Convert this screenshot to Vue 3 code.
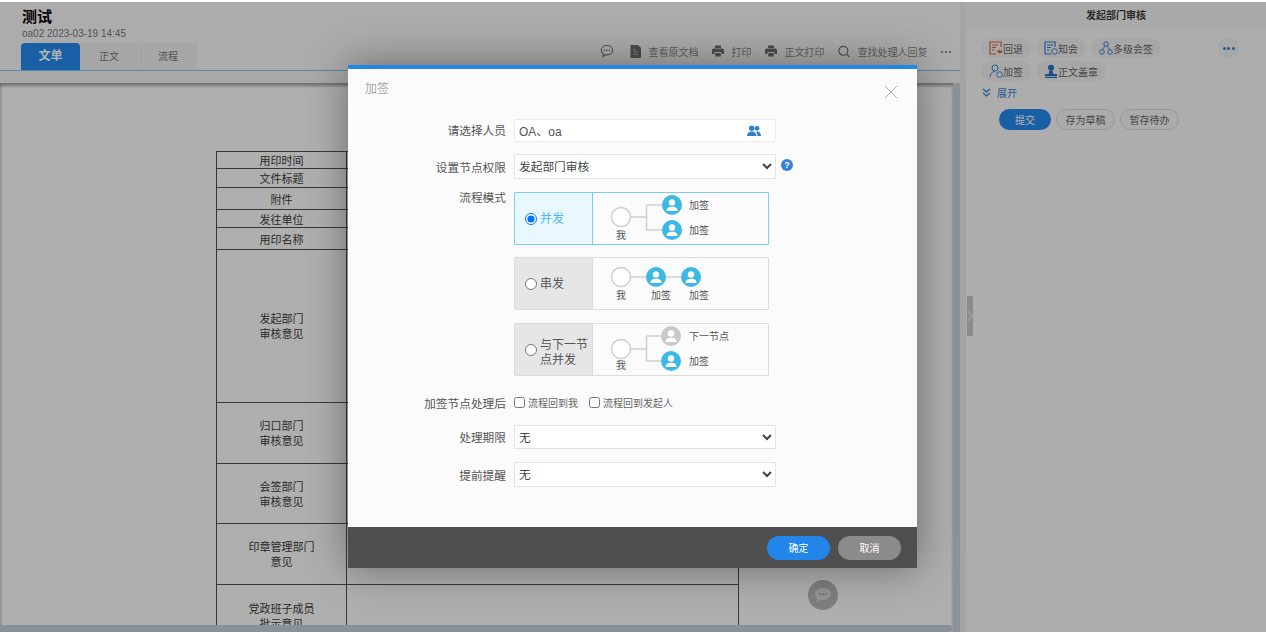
<script setup>
import { ref } from 'vue';

const tabs = ['文单', '正文', '流程'];
const tools = [
  { icon: 'doc', text: '查看原文档' },
  { icon: 'print', text: '打印' },
  { icon: 'print', text: '正文打印' },
  { icon: 'search', text: '查找处理人回复' }
];

// 表格行高来自文单模板
const rows = [
  { h: 17, text: ['用印时间'] },
  { h: 19, text: ['文件标题'] },
  { h: 22, text: ['附件'] },
  { h: 18, text: ['发往单位'] },
  { h: 22, text: ['用印名称'] },
  { h: 153, text: ['发起部门', '审核意见'] },
  { h: 61, text: ['归口部门', '审核意见'] },
  { h: 60, text: ['会签部门', '审核意见'] },
  { h: 61, text: ['印章管理部门', '意见'] },
  { h: 62, text: ['党政班子成员', '批示意见'] }
];

const modes = [
  {
    id: 'parallel',
    label: ['并发'],
    me: [28, 24],
    lines: ['M38 24H53.5M53.5 12V37M53.5 12H69M53.5 37H69'],
    nodes: [{ x: 79, y: 12 }, { x: 79, y: 37 }],
    texts: [
      { x: 23, y: 46, t: '我' },
      { x: 96, y: 15.5, t: '加签' },
      { x: 96, y: 41, t: '加签' }
    ]
  },
  {
    id: 'serial',
    label: ['串发'],
    me: [28, 19],
    lines: ['M38 19H88'],
    nodes: [{ x: 63, y: 19 }, { x: 98, y: 19 }],
    texts: [
      { x: 23, y: 41, t: '我' },
      { x: 58, y: 41, t: '加签' },
      { x: 96, y: 41, t: '加签' }
    ]
  },
  {
    id: 'next',
    label: ['与下一节', '点并发'],
    me: [28, 25],
    lines: ['M38 25H53.5M53.5 12V37M53.5 12H68M53.5 37H68'],
    nodes: [{ x: 78, y: 12, gray: true }, { x: 78, y: 37 }],
    texts: [
      { x: 23, y: 45, t: '我' },
      { x: 96, y: 15.5, t: '下一节点' },
      { x: 96, y: 40.5, t: '加签' }
    ]
  }
];

const mode = ref('parallel');
</script>

<template>
  <div class="page">
    <div class="main">
      <header class="head">
        <div class="head-left">
          <h1>测试</h1>
          <p class="meta">oa02 2023-03-19 14:45</p>
          <div class="tabs">
            <span v-for="(t, i) in tabs" :key="t" class="tab" :class="{ active: i === 0 }">{{ t }}</span>
          </div>
        </div>
        <div class="tools">
          <svg class="tool-chat" width="14" height="14" viewBox="0 0 14 14">
            <path d="M7 1.5c3.2 0 5.6 2 5.6 4.7S10.200 10.900 7 10.900c-.6 0-1.200-.1-1.700-.2L3 12.500v-2.700C2 8.900 1.400 7.600 1.400 6.200 1.400 3.500 3.800 1.500 7 1.500z" fill="none" stroke="#7c7c7c" stroke-width="1.200" />
            <circle cx="4.600" cy="6.200" r=".8" fill="#7c7c7c" />
            <circle cx="7" cy="6.200" r=".8" fill="#7c7c7c" />
            <circle cx="9.400" cy="6.200" r=".8" fill="#7c7c7c" />
          </svg>
          <span v-for="tool in tools" :key="tool.text" class="tool">
            <svg v-if="tool.icon === 'doc'" width="11" height="13" viewBox="0 0 11 13">
              <path d="M.5 0H8l3 3v10H.5z" fill="#6f6f6f" />
              <path d="M3 4.500h3M3 7h5M3 9.500h5" stroke="#b0b0b0" stroke-width="1" />
            </svg>
            <svg v-else-if="tool.icon === 'print'" width="12" height="12" viewBox="0 0 12 12">
              <path d="M3 .5h6V3H3zM1.500 3.500h9A1.500 1.500 0 0 1 12 5v4H9.500V7h-7v2H0V5a1.500 1.500 0 0 1 1.500-1.500zM3.200 8h5.600v3.500H3.200z" fill="#6f6f6f" />
            </svg>
            <svg v-else width="12" height="13" viewBox="0 0 13 13">
              <circle cx="5.800" cy="5.800" r="4.800" fill="none" stroke="#6f6f6f" stroke-width="1.200" />
              <path d="M9.300 9.300l3 3" stroke="#6f6f6f" stroke-width="1.300" />
            </svg>
            <em>{{ tool.text }}</em>
          </span>
          <span class="tool-more">
            <i></i><i></i><i></i>
          </span>
        </div>
      </header>
      <div class="strip"></div>
      <div class="doc-wrap">
        <div class="doc">
          <table class="form-table">
            <tbody>
              <tr v-for="row in rows" :key="row.text[0]" :style="{ height: row.h + 'px' }">
                <td class="cell-label" :class="{ two: row.text.length > 1 }">
                  <div v-for="line in row.text" :key="line">{{ line }}</div>
                </td>
                <td></td>
              </tr>
            </tbody>
          </table>
          <div class="hscroll"></div>
        </div>
        <div class="vscroll"></div>
      </div>
    </div>

    <div class="gutter">
      <div class="handle">
        <svg width="6" height="12" viewBox="0 0 6 12">
          <path d="M1 1l4 5-4 5" fill="none" stroke="#eeeeee" stroke-width="1.200" />
        </svg>
      </div>
    </div>

    <aside class="side">
      <div class="side-title">发起部门审核</div>
      <div class="actions">
        <div class="action-row">
          <span class="pill">
            <svg width="14" height="14" viewBox="0 0 14 14">
              <path d="M12 6V1H1v12h6" fill="none" stroke="#d9623f" stroke-width="1.200" />
              <path d="M3 4h6M3 6.500h4M3 9h2.500" stroke="#d9623f" />
              <path d="M8 10.500l2.500-2.500v1.500H13V12h-2.500v1z" fill="#d9623f" />
            </svg>
            回退
          </span>
          <span class="pill">
            <svg width="14" height="14" viewBox="0 0 14 14">
              <path d="M11 6V1H1v12h6" fill="none" stroke="#3a7fd0" stroke-width="1.200" />
              <path d="M3 4h6M3 6.500h4M3 9h2.500" stroke="#3a7fd0" />
              <circle cx="10.500" cy="10.500" r="2.800" fill="none" stroke="#3a7fd0" />
            </svg>
            知会
          </span>
          <span class="pill">
            <svg width="14" height="14" viewBox="0 0 14 14" fill="none" stroke="#3a7fd0">
              <rect x="5" y="1" width="4" height="4" rx="1" />
              <circle cx="3" cy="11" r="2.300" />
              <circle cx="11" cy="11" r="2.300" />
              <path d="M6 5L3.500 8.700M8 5l2.500 3.700" />
            </svg>
            多级会签
          </span>
          <span class="more"><i></i><i></i><i></i></span>
        </div>
        <div class="action-row">
          <span class="pill">
            <svg width="14" height="14" viewBox="0 0 14 14" fill="none" stroke="#3a7fd0">
              <circle cx="6" cy="4" r="3" />
              <path d="M1 13c0-3.500 2-5.500 5-5.500" />
              <circle cx="10.500" cy="10.500" r="2.800" />
            </svg>
            加签
          </span>
          <span class="pill">
            <svg width="14" height="14" viewBox="0 0 14 14">
              <circle cx="7" cy="3.800" r="3" fill="#2a6fc0" />
              <path d="M5.500 6.500h3l1 3.500H13v2H1v-2h3.500zM1 12.800h12V14H1z" fill="#2a6fc0" />
            </svg>
            正文盖章
          </span>
        </div>
        <div class="expand">
          <svg width="9" height="9" viewBox="0 0 9 9" fill="none" stroke="#2f7fd0" stroke-width="1.300">
            <path d="M1 1l3.500 3L8 1M1 5l3.500 3L8 5" />
          </svg>
          <span>展开</span>
        </div>
        <div class="submit-row">
          <button class="btn-submit">提交</button>
          <button class="btn-line">存为草稿</button>
          <button class="btn-line">暂存待办</button>
        </div>
      </div>
    </aside>

    <div class="chat-float">
      <svg width="18" height="16" viewBox="0 0 18 16">
        <path d="M9 1c4.400 0 8 2.700 8 6s-3.600 6-8 6c-.9 0-1.700-.1-2.500-.3L3 15v-3.500C1.800 10.400 1 8.800 1 7c0-3.300 3.600-6 8-6z" fill="#d6d6d6" />
        <circle cx="6" cy="7" r="1" fill="#a0a0a0" />
        <circle cx="9" cy="7" r="1" fill="#a0a0a0" />
        <circle cx="12" cy="7" r="1" fill="#a0a0a0" />
      </svg>
    </div>

    <div class="mask"></div>

    <div class="modal">
      <div class="modal-head">
        <span>加签</span>
        <svg class="close" width="14" height="14" viewBox="0 0 16 16">
          <path d="M1 1l14 14M15 1L1 15" stroke="#a8a8a8" stroke-width="1.100" />
        </svg>
      </div>

      <div class="modal-body">
        <div class="field field-people">
          <label>请选择人员</label>
          <div class="people-input">
            <span>OA、oa</span>
            <svg width="14" height="12" viewBox="0 0 14 12" fill="#2f7fd0">
              <circle cx="4.700" cy="3.300" r="2.700" />
              <circle cx="10" cy="3.300" r="2.400" />
              <path d="M0 11c0-3 1.800-4.500 4.700-4.500S9.400 8 9.400 11zM10.400 11c0-1.800-.4-3.300-1.500-4.300.4-.2.800-.2 1.300-.2 2.400 0 3.800 1.500 3.800 4.500z" />
            </svg>
          </div>
        </div>

        <div class="field field-node">
          <label>设置节点权限</label>
          <div class="with-help">
            <select class="sel">
              <option>发起部门审核</option>
            </select>
            <span class="help">?</span>
          </div>
        </div>

        <div class="field field-mode">
          <label class="top-label">流程模式</label>
          <div class="mode-list">
            <div v-for="m in modes" :key="m.id" class="mode" :class="{ checked: mode === m.id }">
              <label class="mode-pick">
                <input v-model="mode" type="radio" name="mode" :value="m.id" />
                <span class="mode-text">
                  <span v-for="l in m.label" :key="l" class="mode-line">{{ l }}</span>
                </span>
              </label>
              <svg class="diagram" width="175" height="51" viewBox="0 0 175 51">
                <path v-for="d in m.lines" :key="d" :d="d" fill="none" stroke="#cfcfcf" stroke-width="1.500" />
                <circle :cx="m.me[0]" :cy="m.me[1]" r="9.500" fill="#fff" stroke="#cfcfcf" stroke-width="1.500" />
                <g v-for="n in m.nodes" :key="n.x + '-' + n.y" :transform="`translate(${n.x} ${n.y})`">
                  <circle r="10" :fill="n.gray ? '#c9c9c9' : '#3cb8e6'" />
                  <circle cy="-2.500" r="3.200" fill="#fff" />
                  <path d="M-5.500 6c0-3 2-4.200 5.500-4.200S5.500 3 5.500 6z" fill="#fff" />
                </g>
                <text v-for="t in m.texts" :key="t.x + t.t" :x="t.x" :y="t.y" class="dia-text">{{ t.t }}</text>
              </svg>
            </div>
          </div>
        </div>

        <div class="field field-after">
          <label>加签节点处理后</label>
          <div class="checks">
            <label class="check"><input type="checkbox" />流程回到我</label>
            <label class="check"><input type="checkbox" />流程回到发起人</label>
          </div>
        </div>

        <div class="field field-limit">
          <label>处理期限</label>
          <select class="sel sel-limit">
            <option>无</option>
          </select>
        </div>

        <div class="field field-remind">
          <label>提前提醒</label>
          <select class="sel">
            <option>无</option>
          </select>
        </div>
      </div>

      <div class="modal-foot">
        <button class="btn-ok">确定</button>
        <button class="btn-cancel">取消</button>
      </div>
    </div>
  </div>
</template>

<style scoped>
.page {
  position: relative;
  display: flex;
  width: 100vw;
  height: 100vh;
  overflow: hidden;
  background: #f9f9f9;
  border-top: 2px solid #fff;
  box-sizing: border-box;
  font-family: "Liberation Sans", "Noto Sans CJK SC", sans-serif;
  font-size: 12px;
  color: #3a3a3a;
}
.main {
  width: 960px;
  flex: none;
  display: flex;
  flex-direction: column;
  min-height: 0;
}
.head {
  display: flex;
  justify-content: space-between;
  align-items: flex-end;
  height: 69px;
  flex: none;
  padding: 0 6px 0 21px;
  box-sizing: border-box;
  border-bottom: 1px solid #7cc4f0;
  background: #f7f7f7;
}
.head-left {
  display: flex;
  flex-direction: column;
}
h1 {
  margin: 6px 0 0 1px;
  font-size: 15px;
  line-height: 17px;
  font-weight: 700;
  color: #000;
}
.meta {
  margin: 3px 0 0 1px;
  font-size: 10px;
  line-height: 12px;
  color: #777;
}
.tabs {
  display: flex;
  margin-top: 3px;
}
.tab {
  width: 58px;
  height: 27px;
  line-height: 27px;
  text-align: center;
  font-size: 10px;
  color: #777;
  background: #eeeeee;
}
.tab:last-child {
  margin-left: 1px;
}
.tab.active {
  width: 59px;
  background: #2488ee;
  color: #fff;
  font-size: 12px;
  font-weight: 700;
  border-radius: 4px 4px 0 0;
}
.tools {
  display: flex;
  align-items: center;
  height: 16px;
  margin-bottom: 11px;
  color: #888;
}
.tool-chat {
  margin-right: 16px;
}
.tool {
  display: flex;
  align-items: center;
  gap: 8px;
  margin-right: 13px;
}
.tool em {
  font-style: normal;
  font-size: 10px;
}
.tool-more {
  display: flex;
  gap: 1.500px;
  margin: 2px 3px 0 0;
}
.tool-more i {
  width: 2.500px;
  height: 2.500px;
  border-radius: 50%;
  background: #6f6f6f;
}
.strip {
  height: 12px;
  flex: none;
  background: #f2f2f2;
}
.doc-wrap {
  flex: 1;
  min-height: 0;
  display: flex;
}
.doc {
  position: relative;
  flex: 1;
  min-width: 0;
  overflow: hidden;
  padding-top: 68px;
  box-shadow: inset 0 3px 3px rgba(0, 0, 0, 0.35), inset 2px 0 0 #eeeeee;
  background: #fbfbfb;
}
.form-table {
  width: 523px;
  margin: 0 0 0 216px;
  border-collapse: collapse;
  table-layout: fixed;
  font-size: 11px;
  line-height: 14px;
}
.form-table td {
  padding: 0;
  border: 1px solid #505050;
}
.form-table .cell-label {
  width: 130px;
  padding-top: 2px;
  box-sizing: border-box;
  text-align: center;
}
.form-table .cell-label.two {
  line-height: 15px;
}
.hscroll {
  position: absolute;
  left: 0;
  right: 1px;
  bottom: 0;
  height: 7px;
  border-radius: 0 4px 4px 0;
  background: #c4ced8;
}
.vscroll {
  width: 7px;
  flex: none;
  background: #c9d3de;
}
.gutter {
  position: relative;
  width: 6px;
  flex: none;
  background: #ececec;
}
.handle {
  position: absolute;
  left: 7px;
  top: 294px;
  width: 6px;
  height: 40px;
  display: flex;
  align-items: center;
  justify-content: center;
  border-radius: 0 2px 2px 0;
  background: #c6c6c6;
}
.side {
  flex: 1;
  min-width: 0;
  background: #f8f8f8;
}
.side-title {
  height: 28px;
  line-height: 28px;
  text-align: center;
  font-size: 10px;
  font-weight: 700;
  background: #f2f2f2;
}
.actions {
  padding: 8px 27px 0 15px;
}
.action-row {
  display: flex;
  gap: 5px;
  margin-bottom: 2px;
}
.pill {
  display: flex;
  align-items: center;
  height: 20px;
  padding: 0 8px;
  border-radius: 10px;
  background: #f0f0f0;
  font-size: 10px;
  color: #666;
  white-space: nowrap;
}
.pill svg {
  flex: none;
}
.more {
  display: flex;
  align-items: center;
  justify-content: center;
  gap: 1.500px;
  width: 21px;
  height: 21px;
  margin-left: auto;
  border-radius: 50%;
  background: #f0f0f0;
}
.more i {
  width: 3px;
  height: 3px;
  border-radius: 50%;
  background: #3a7fd0;
}
.expand {
  display: flex;
  align-items: center;
  gap: 6px;
  margin: 4px 0 0 1px;
  height: 14px;
  font-size: 10px;
  color: #3a7fd0;
}
.submit-row {
  display: flex;
  gap: 5px;
  margin: 10px 0 0 18px;
}
.submit-row button {
  height: 21px;
  padding: 0;
  border-radius: 11px;
  font-family: inherit;
  font-size: 10px;
}
.btn-submit {
  width: 52px;
  border: none;
  color: #fff;
  background: #2488ee;
}
.btn-line {
  width: 59px;
  border: 1px solid #d5dce2;
  background: #f5f5f5;
  color: #666;
}
.chat-float {
  position: absolute;
  left: 808px;
  top: 578px;
  width: 30px;
  height: 30px;
  display: flex;
  align-items: center;
  justify-content: center;
  border-radius: 50%;
  background: #b6b6b6;
}
.mask {
  position: absolute;
  inset: -2px 0 0;
  background: rgba(0, 0, 0, 0.3);
}
.modal {
  position: absolute;
  left: 348px;
  top: 63px;
  width: 569px;
  height: 503px;
  display: flex;
  flex-direction: column;
  box-sizing: border-box;
  border-top: 4px solid #2185ea;
  background: #fbfbfb;
  box-shadow: 0 0 40px rgba(0, 0, 0, 0.4);
}
.modal-head {
  display: flex;
  justify-content: space-between;
  align-items: center;
  height: 40px;
  flex: none;
  box-sizing: border-box;
  padding: 0 19px 3px 17px;
  font-size: 12px;
  color: #a6a6a6;
}
.close {
  margin-top: 9px;
}
.modal-body {
  flex: 1;
  padding-top: 10px;
}
.field {
  display: grid;
  grid-template-columns: 158px 262px;
  column-gap: 8px;
  align-items: center;
}
.field > label {
  text-align: right;
  font-size: 11.700px;
  color: #555;
}
.field-people > label,
.field-limit > label {
  padding-bottom: 2px;
}
.field-node {
  margin-top: 12px;
}
.field-mode {
  margin-top: 13px;
  align-items: start;
}
.field > .top-label {
  line-height: 12px;
}
.field-after {
  margin-top: 18px;
  height: 16px;
}
.field-limit {
  margin-top: 15px;
}
.field-remind {
  margin-top: 13px;
}
.people-input {
  display: flex;
  justify-content: space-between;
  align-items: center;
  height: 23px;
  padding: 0 14px 0 4px;
  box-sizing: border-box;
  border: 1px solid #ececec;
  border-radius: 2px;
  background: #fff;
  color: #555;
}
.with-help {
  position: relative;
}
.help {
  position: absolute;
  left: 267px;
  top: 5px;
  width: 12px;
  height: 12px;
  line-height: 12px;
  text-align: center;
  border-radius: 50%;
  background: #3b7de0;
  color: #fff;
  font-size: 9px;
  font-weight: 700;
}
.sel {
  display: block;
  width: 262px;
  height: 25px;
  padding: 0;
  box-sizing: border-box;
  border: 1px solid #e4e4e4;
  background: #fff;
  color: #444;
  font-family: inherit;
  font-size: 11.700px;
}
.sel-limit {
  height: 24px;
}
.mode-list {
  display: flex;
  flex-direction: column;
  gap: 12px;
  width: 255px;
}
.mode {
  display: flex;
  height: 53px;
  box-sizing: border-box;
  border: 1px solid #dcdcdc;
  border-radius: 1px;
  background: #fbfbfb;
}
.mode:last-child {
  margin-top: 1px;
}
.mode.checked {
  border-color: #7ccdf2;
}
.mode-pick {
  display: flex;
  align-items: center;
  width: 78px;
  flex: none;
  box-sizing: border-box;
  padding-left: 10px;
  border-right: 1px solid #dcdcdc;
  background: #e6e6e6;
  color: #555;
}
.checked .mode-pick {
  background: #e9f7ff;
  border-right-color: #7ccdf2;
  color: #4db8ee;
}
.mode-pick input {
  width: 12px;
  height: 12px;
  margin: 0 3px 0 0;
  flex: none;
}
.mode-text {
  padding-top: 2px;
}
.mode-line {
  display: block;
  line-height: 15px;
}
.mode-line:first-child:not(:last-child) {
  margin-top: 4px;
}
.diagram {
  display: block;
  flex: none;
}
.dia-text {
  font-size: 10px;
  fill: #555;
}
.checks {
  display: flex;
  gap: 11px;
}
.check {
  display: flex;
  align-items: center;
  font-size: 10px;
  color: #666;
}
.check input {
  width: 11px;
  height: 11px;
  margin: 0 3px 0 0;
}
.modal-foot {
  display: flex;
  justify-content: flex-end;
  align-items: center;
  gap: 8px;
  height: 41px;
  flex: none;
  padding-right: 16px;
  background: #4f4f4f;
}
.modal-foot button {
  width: 63px;
  height: 24px;
  padding: 0;
  border: none;
  border-radius: 12px;
  color: #fff;
  font-family: inherit;
  font-size: 10px;
}
.btn-ok {
  background: #2185ea;
}
.btn-cancel {
  background: #8b8b8b;
}
</style>
